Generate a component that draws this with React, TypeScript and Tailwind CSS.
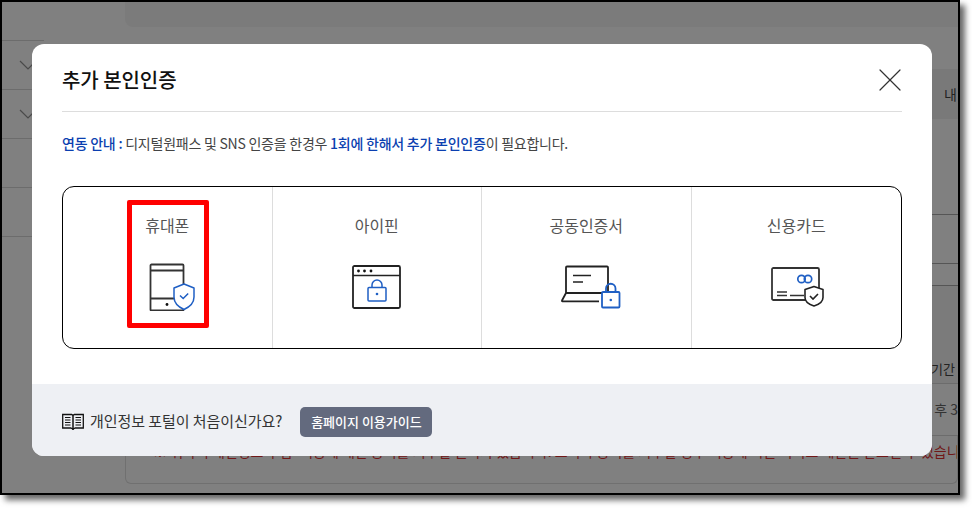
import { X } from 'lucide-react';

const KR = "font-['Noto_Sans_CJK_KR','Noto_Sans',sans-serif]";

function PhoneIcon() {
  return (
    <svg width="46" height="48" viewBox="0 0 46 48" fill="none">
      <path d="M1.5 2.5a1 1 0 0 1 1-1h31a1 1 0 0 1 1 1v44a1 1 0 0 1-1 1h-31a1 1 0 0 1-1-1z" stroke="#333" strokeWidth="1.8" />
      <path d="M1.5 7.5h33M1.5 35.5h33" stroke="#333" strokeWidth="1.8" />
      <circle cx="18" cy="41.5" r="1.4" fill="#111" />
      <path d="M35 21l10 4v9c0 6-4.500 10-10 12.500C29.500 44 25 40 25 34v-9z" fill="#fff" stroke="#1f5fc4" strokeWidth="1.5" strokeLinejoin="round" />
      <path d="M31 32.500l3.200 3 5-5" stroke="#1f5fc4" strokeWidth="1.5" />
    </svg>
  );
}

function IpinIcon() {
  return (
    <svg width="50" height="45" viewBox="0 0 50 45" fill="none">
      <rect x="1" y="1" width="47" height="42" rx="1.500" stroke="#222" strokeWidth="1.800" />
      <path d="M1 10.500h47" stroke="#222" strokeWidth="1.500" />
      <circle cx="6.500" cy="6" r="1.400" fill="#111" />
      <circle cx="12.500" cy="6" r="1.400" fill="#111" />
      <circle cx="19" cy="6" r="1.400" fill="#111" />
      <rect x="16" y="22.500" width="18" height="13.500" rx="1" stroke="#1f5fc4" strokeWidth="1.500" />
      <path d="M20 22.500v-2.500a5 5 0 0 1 10 0v2.500" stroke="#1f5fc4" strokeWidth="1.500" />
      <circle cx="25" cy="29" r="1.300" fill="#1f5fc4" />
    </svg>
  );
}

function CertIcon() {
  return (
    <svg width="60" height="45" viewBox="0 0 60 45" fill="none">
      <path d="M5 28V2.500a1 1 0 0 1 1-1h40a1 1 0 0 1 1 1V28" stroke="#222" strokeWidth="1.800" />
      <path d="M5 28h36M5 28l-4 7.500a.500.500 0 0 0 .500.800H38" stroke="#222" strokeWidth="1.800" />
      <path d="M12 10.500h18M12 17h10" stroke="#222" strokeWidth="1.500" />
      <rect x="41" y="27" width="17.500" height="15.500" rx="1" fill="#fff" stroke="#1f5fc4" strokeWidth="1.800" />
      <path d="M45 27v-3.500a4.700 4.700 0 0 1 9.500 0V27" stroke="#1f5fc4" strokeWidth="1.800" />
      <circle cx="49.800" cy="35" r="1.300" fill="#1f5fc4" />
    </svg>
  );
}

function CardIcon() {
  return (
    <svg width="54" height="40" viewBox="0 0 54 40" fill="none">
      <rect x="1" y="1" width="47" height="32" rx="1.500" stroke="#333" strokeWidth="1.800" />
      <circle cx="30.500" cy="12" r="3.700" stroke="#1f5fc4" strokeWidth="1.700" />
      <circle cx="37" cy="12" r="3.700" stroke="#1f5fc4" strokeWidth="1.700" />
      <path d="M6 25h10M6 28.500h10M19 28.500h14" stroke="#333" strokeWidth="1.300" />
      <path d="M43 19.500l9 3v8c0 4-4 7-9 8.500-5-1.500-9-4.500-9-8.500v-8z" fill="#fff" stroke="#222" strokeWidth="1.600" strokeLinejoin="round" />
      <path d="M39 29l3 3 5-5" stroke="#222" strokeWidth="1.600" />
    </svg>
  );
}

function BookIcon() {
  return (
    <svg width="22" height="18" viewBox="0 0 22 18" fill="none" stroke="#111">
      <path d="M.7 1.500h9l1.300 1 1.300-1h9v13.500h-8l-2.300 1-2.300-1h-8z" strokeWidth="1.300" />
      <path d="M11 2.500v14.500" strokeWidth="1.500" />
      <path d="M3 4.500h5.500M3 7h5.500M3 9.500h5.500M3 12h5.500M13.500 4.500H19M13.500 7H19M13.500 9.500H19M13.500 12H19" strokeWidth="1" />
    </svg>
  );
}

const METHODS = [
  { name: '휴대폰', icon: <PhoneIcon />, pad: 'pl-[10px]' },
  { name: '아이핀', icon: <IpinIcon />, pad: '' },
  { name: '공동인증서', icon: <CertIcon />, pad: 'pl-[10px]' },
  { name: '신용카드', icon: <CardIcon />, pad: 'pl-[4px]' },
];

export default function App() {
  return (
    <div className={`relative h-[508px] w-[972px] overflow-hidden bg-white ${KR}`}>
      {/* dimmed page behind the modal */}
      <div className="flex h-[495px] w-[960px] overflow-hidden border-2 border-black bg-[#808080] shadow-[5px_5px_6px_rgba(0,0,0,0.6)]">
        <div className="w-[123px] shrink-0 pt-[38px]">
          {[0, 1, 2, 3, 4].map((i) => (
            <div key={i} className="flex h-[49px] w-[42px] items-center border-t border-[#6c6c6c] pl-[17px]">
              {i < 2 && (
                <svg width="18" height="10" viewBox="0 0 18 10" fill="none" className="shrink-0">
                  <path d="M1 1l8 8 8-8" stroke="#4a4a4a" strokeWidth="1.200" />
                </svg>
              )}
            </div>
          ))}
        </div>
        <div className="min-w-0 flex-1">
          <div className="h-[25px] rounded-bl-lg bg-[#7b7b7b]" />
          <div className="mt-[42px] flex h-[50px] items-center justify-end overflow-hidden bg-[#797979] text-[14px] text-[#222]">
            <span className="pr-[1px]">내</span>
          </div>
          <div className="mt-[95px] h-[50px] border-y border-[#555]" />
          <div className="h-[22px] border-b border-[#555]" />
          <div className="flex h-[98px] items-end justify-end border-b border-[#6c6c6c] bg-[#7b7b7b] pr-[3px] pb-[5px] text-[13px] text-[#222]">
            기간
          </div>
          <div className="flex h-[52px] items-center justify-end overflow-hidden border-b border-[#6c6c6c] text-[14px] text-[#333]">
            후 3
          </div>
          <div className="h-[48px] rounded-b-md border border-t-0 border-[#707070] pt-[6px]">
            <p className="overflow-hidden pl-[27px] text-[14px] leading-[18px] whitespace-nowrap text-[#701818]">
              ※ 귀하의 개인정보 수집·이용에 대한 동의를 거부할 권리가 있습니다. 그러나 동의를 거부할 경우 이용에 따른 서비스 제한을 받으실 수 있습니다
            </p>
          </div>
        </div>
      </div>

      {/* modal */}
      <div className="absolute top-[44px] left-[32px] h-[412px] w-[900px] overflow-hidden rounded-[12px] bg-white">
        <div className="mx-[30px] flex h-[68px] items-center justify-between border-b border-[#dddddd] pt-[5px]">
          <h2 className="text-[20px] font-medium tracking-[-0.05px] text-[#111]">추가 본인인증</h2>
          <X size={40} strokeWidth={1.200} className="-mr-[8px] text-[#333]" absoluteStrokeWidth />
        </div>
        <p className="mx-[30px] mt-[21px] text-[14px] leading-[20px] tracking-[-0.24px] text-[#444]">
          <span className="font-medium text-[#0b3fb0]">연동 안내 :</span> 디지털원패스 및 SNS 인증을 한경우{' '}
          <span className="font-medium text-[#0b3fb0]">1회에 한해서 추가 본인인증</span>이 필요합니다.
        </p>
        <div className="mx-[30px] mt-[33px] grid h-[163px] grid-cols-4 rounded-[12px] border border-black">
          {METHODS.map((m) => (
            <div key={m.name} className="flex flex-col items-center border-r border-[#dddddd] pt-[26px] last:border-r-0">
              <span className="text-[16px] leading-[24px] text-[#555]">{m.name}</span>
              <div className={`mt-[26px] flex h-[48px] items-center justify-center ${m.pad}`}>{m.icon}</div>
            </div>
          ))}
        </div>
        <div className="mt-[35px] flex h-[72px] items-center bg-[#eef0f4] pt-[3px] pl-[30px]">
          <BookIcon />
          <span className="ml-[6px] text-[15px] tracking-[-0.05px] text-[#333]">개인정보 포털이 처음이신가요?</span>
          <button className="ml-[18px] h-[30px] w-[132px] rounded-[5px] bg-[#636a7e] text-[13px] font-medium text-white">
            홈페이지 이용가이드
          </button>
        </div>
      </div>

      {/* red highlight drawn over the capture */}
      <div className="absolute top-[200px] left-[127px] h-[128px] w-[82px] rounded-[2px] border-[5px] border-[#ff0000]" />
    </div>
  );
}
